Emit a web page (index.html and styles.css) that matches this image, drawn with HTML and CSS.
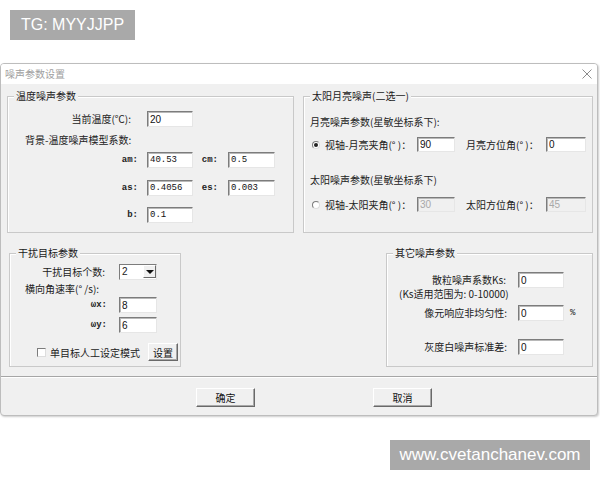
FILE: index.html
```html
<!DOCTYPE html>
<html lang="zh-CN">
<head>
    <meta charset="UTF-8">
    <title>噪声参数设置</title>
    <link rel="stylesheet" href="styles.css">
</head>
<body>
    <div class="tag">TG: MYYJJPP</div>

    <div class="dialog">
        <div class="titlebar">
            <span class="title">噪声参数设置</span>
            <svg class="close" width="10" height="10" viewBox="0 0 10 10">
                <path d="M0.5 0.5 L9.5 9.5 M9.5 0.5 L0.5 9.5" stroke="#8c8c8c" stroke-width="1" fill="none"/>
            </svg>
        </div>

        <div class="content">
            <div class="top-row">
                <!-- 温度噪声 -->
                <div class="group g-temp">
                    <span class="legend">温度噪声参数</span>
                    <div class="trow row-a">
                        <span class="lbl pad16">当前温度(℃):</span>
                        <input class="edit" value="20">
                    </div>
                    <div class="trow row-b">
                        <span class="lbl-left">背景-温度噪声模型系数:</span>
                    </div>
                    <div class="trow row-c">
                        <span class="lbl small">am:</span>
                        <input class="edit mono" value="40.53">
                        <span class="lbl small">cm:</span>
                        <input class="edit mono" value="0.5">
                    </div>
                    <div class="trow row-d">
                        <span class="lbl small">as:</span>
                        <input class="edit mono" value="0.4056">
                        <span class="lbl small">es:</span>
                        <input class="edit mono" value="0.003">
                    </div>
                    <div class="trow row-e">
                        <span class="lbl small">b:</span>
                        <input class="edit mono" value="0.1">
                    </div>
                </div>

                <!-- 太阳月亮噪声 -->
                <div class="group g-sun">
                    <span class="legend">太阳月亮噪声(二选一)</span>
                    <div class="sun-text">月亮噪声参数(星敏坐标系下):</div>
                    <div class="srow srow-1">
                        <span class="radio checked"></span>
                        <span class="slbl">视轴-月亮夹角(° )：</span>
                        <input class="edit" value="90">
                        <span></span>
                        <span class="slbl">月亮方位角(° )：</span>
                        <input class="edit" value="0">
                    </div>
                    <div class="sun-text sun-text-2">太阳噪声参数(星敏坐标系下)</div>
                    <div class="srow srow-2">
                        <span class="radio"></span>
                        <span class="slbl">视轴-太阳夹角(° )：</span>
                        <input class="edit" value="30" disabled>
                        <span></span>
                        <span class="slbl">太阳方位角(° )：</span>
                        <input class="edit" value="45" disabled>
                    </div>
                </div>
            </div>

            <div class="bottom-row">
                <!-- 干扰目标 -->
                <div class="group g-target">
                    <span class="legend">干扰目标参数</span>
                    <div class="grow">
                        <span class="lbl pad14">干扰目标个数:</span>
                        <div class="combo"><span>2</span><span class="combo-btn"></span></div>
                    </div>
                    <div class="grow grow-b">
                        <span class="lbl-left">横向角速率(° /s):</span>
                    </div>
                    <div class="grow grow-c">
                        <span class="lbl small pad12">ωx:</span>
                        <input class="edit" value="8">
                    </div>
                    <div class="grow grow-d">
                        <span class="lbl small pad12">ωy:</span>
                        <input class="edit" value="6">
                    </div>
                    <div class="check-row">
                        <span class="check"></span>
                        <span class="check-lbl">单目标人工设定模式</span>
                        <button class="btn btn-small">设置</button>
                    </div>
                </div>

                <!-- 其它噪声 -->
                <div class="group g-other">
                    <span class="legend">其它噪声参数</span>
                    <div class="orow">
                        <span class="lbl pad12">散粒噪声系数Ks:</span>
                        <input class="edit" value="0">
                    </div>
                    <div class="orow orow-note">
                        <span class="note">(Ks适用范围为: 0-10000)</span>
                    </div>
                    <div class="orow orow-c">
                        <span class="lbl pad11">像元响应非均匀性:</span>
                        <input class="edit" value="0">
                        <span class="pct">%</span>
                    </div>
                    <div class="orow orow-d">
                        <span class="lbl pad11">灰度白噪声标准差:</span>
                        <input class="edit" value="0">
                    </div>
                </div>
            </div>
        </div>

        <div class="separator"></div>

        <div class="footer">
            <button class="btn">确定</button>
            <button class="btn">取消</button>
        </div>
    </div>

    <div class="site">www.cvetanchanev.com</div>
</body>
</html>
```

FILE: styles.css
```css
body {
    margin: 0;
    background-color: #ffffff;
    font-family: "Noto Sans CJK SC", "Liberation Sans", sans-serif;
    font-size: 10px;
    color: #222;
}

.tag {
    width: 125px;
    height: 30px;
    margin: 10px 0 0 10px;
    background-color: #a9a9a9;
    color: #fff;
    font-family: "Liberation Sans", Arial, sans-serif;
    font-size: 16px;
    line-height: 30px;
    text-align: center;
}

.dialog {
    width: 598px;
    box-sizing: border-box;
    margin-top: 23px;
    border: 1px solid #bdbdbd;
    border-radius: 4px;
    background-color: #f0f0f0;
    box-shadow: 1px 1px 2px rgba(0, 0, 0, 0.2);
    overflow: hidden;
}

.titlebar {
    height: 20px;
    background-color: #fff;
    display: flex;
    justify-content: space-between;
    align-items: center;
    padding: 0 5px 0 4px;
}

.title {
    color: #a0a0a0;
    line-height: 20px;
}

.content {
    padding-top: 12px;
}

/* group boxes */
.group {
    position: relative;
    box-sizing: border-box;
    border: 1px solid #c9c9c9;
    box-shadow: inset 1px 1px 0 #fff;
}

.legend {
    position: absolute;
    top: -8px;
    left: 6px;
    padding: 0 2px;
    line-height: 14px;
    background-color: #f0f0f0;
    color: #1a1a1a;
}

.top-row {
    display: grid;
    grid-template-columns: 287px 290px;
    column-gap: 9px;
    padding-left: 6px;
}

.bottom-row {
    display: flex;
    margin-top: 20px;
    padding: 0 4px 0 8px;
}

.g-temp,
.g-sun {
    height: 137px;
}

.g-target,
.g-other {
    height: 114px;
}

.g-target {
    width: 172px;
    padding-top: 9px;
}

.g-other {
    width: 207px;
    margin-left: auto;
    padding-top: 18px;
}

/* labels and edits */
.lbl {
    text-align: right;
    padding-right: 9px;
    line-height: 16px;
    white-space: nowrap;
}

.lbl.small {
    font-family: "Liberation Mono", "Noto Sans CJK SC", monospace;
    font-weight: bold;
    font-size: 9px;
}

.pad16 { padding-right: 16px; }
.pad14 { padding-right: 14px; }
.pad12 { padding-right: 12px; }
.pad11 { padding-right: 11px; }

.lbl-left {
    grid-column: 1 / -1;
    white-space: nowrap;
    line-height: 14px;
}

.edit {
    box-sizing: border-box;
    width: 100%;
    height: 16px;
    margin: 0;
    padding: 0 2px;
    font-family: "Liberation Sans", Arial, sans-serif;
    font-size: 10px;
    color: #111;
    background-color: #fff;
    border: 1px solid;
    border-color: #7c7c7c #e6e6e6 #e6e6e6 #7c7c7c;
    box-shadow: inset 1px 1px 0 #b8b8b8;
    outline: none;
}

.edit.mono {
    font-family: "Liberation Mono", monospace;
    font-size: 9px;
}

.edit:disabled {
    background-color: #f0f0f0;
    color: #a8a8a8;
}

/* temperature group */
.g-temp {
    padding-top: 14px;
}

.trow {
    display: grid;
    grid-template-columns: 139px 46px 35px 47px;
    align-items: center;
    height: 16px;
}

.trow .lbl.small:nth-of-type(2) {
    padding-right: 10px;
}

.row-b {
    height: 14px;
    margin-top: 6px;
}

.row-b .lbl-left {
    padding-left: 17px;
}

.row-c { margin-top: 5px; }
.row-d { margin-top: 12px; }
.row-e { margin-top: 11px; }

/* sun / moon group */
.g-sun {
    padding: 18px 0 0 6px;
}

.sun-text {
    line-height: 14px;
    white-space: nowrap;
}

.sun-text-2 {
    margin-top: 21px;
}

.srow {
    display: grid;
    grid-template-columns: 14px 93px 38px 10px 81px 40px;
    align-items: center;
    height: 15px;
    margin-top: 8px;
}

.srow .edit {
    height: 15px;
}

.srow-2 {
    margin-top: 10px;
}

.slbl {
    padding-left: 1px;
    white-space: nowrap;
}

.radio {
    position: relative;
    width: 8px;
    height: 8px;
    margin-left: 2px;
    box-sizing: border-box;
    border: 1px solid;
    border-color: #7c7c7c #ddd #ddd #7c7c7c;
    border-radius: 50%;
    background-color: #fff;
}

.radio.checked::after {
    content: "";
    position: absolute;
    left: 1px;
    top: 1px;
    width: 4px;
    height: 4px;
    border-radius: 50%;
    background-color: #222;
}

/* target group */
.grow {
    display: grid;
    grid-template-columns: 109px 38px 1fr;
    align-items: center;
    height: 17px;
}

.grow-b .lbl-left {
    padding-left: 15px;
}

.grow-c {
    height: 16px;
    margin-top: 0;
}

.grow-d {
    height: 16px;
    margin-top: 4px;
}

.combo {
    box-sizing: border-box;
    height: 16px;
    display: flex;
    justify-content: space-between;
    align-items: center;
    padding-left: 2px;
    font-family: "Liberation Sans", Arial, sans-serif;
    background-color: #fff;
    border: 1px solid;
    border-color: #7c7c7c #e6e6e6 #e6e6e6 #7c7c7c;
}

.combo-btn {
    position: relative;
    width: 13px;
    height: 13px;
    box-sizing: border-box;
    background-color: #f0f0f0;
    border: 1px solid;
    border-color: #fff #6a6a6a #6a6a6a #fff;
}

.combo-btn::after {
    content: "";
    position: absolute;
    left: 2px;
    top: 4px;
    border-left: 4px solid transparent;
    border-right: 4px solid transparent;
    border-top: 4px solid #111;
}

.check-row {
    display: flex;
    align-items: center;
    margin-top: 10px;
    padding-left: 27px;
    height: 18px;
}

.check {
    width: 9px;
    height: 9px;
    box-sizing: border-box;
    border: 1px solid;
    border-color: #7c7c7c #ddd #ddd #7c7c7c;
    background-color: #fff;
}

.check-lbl {
    margin-left: 4px;
    white-space: nowrap;
}

/* buttons */
.btn {
    box-sizing: border-box;
    width: 59px;
    height: 19px;
    margin: 0;
    padding: 0;
    font-family: "Noto Sans CJK SC", sans-serif;
    font-size: 10px;
    color: #111;
    background-color: #f0f0f0;
    border: 1px solid;
    border-color: #fff #696969 #696969 #fff;
    box-shadow: inset -1px -1px 0 #a8a8a8;
}

.btn-small {
    width: 30px;
    height: 18px;
    margin-left: auto;
    margin-right: 2px;
}

/* other noise group */
.orow {
    display: grid;
    grid-template-columns: 131px 46px 1fr;
    align-items: center;
    height: 16px;
}

.orow-note {
    height: 17px;
    align-items: start;
}

.note {
    padding-left: 12px;
    line-height: 12px;
    white-space: nowrap;
}

.orow-c {
    margin-top: 0;
}

.orow-d {
    margin-top: 18px;
}

.pct {
    padding-left: 6px;
    font-family: "Liberation Mono", monospace;
    font-size: 9px;
}

.separator {
    margin-top: 9px;
    border-top: 1px solid #a6a6a6;
    border-bottom: 1px solid #fff;
}

.footer {
    display: flex;
    gap: 118px;
    padding: 10px 0 8px 195px;
}

.site {
    width: 200px;
    height: 30px;
    margin: 24px 0 0 390px;
    background-color: #a9a9a9;
    color: #fff;
    font-family: "Liberation Sans", Arial, sans-serif;
    font-size: 17px;
    line-height: 30px;
    text-align: center;
}
```
